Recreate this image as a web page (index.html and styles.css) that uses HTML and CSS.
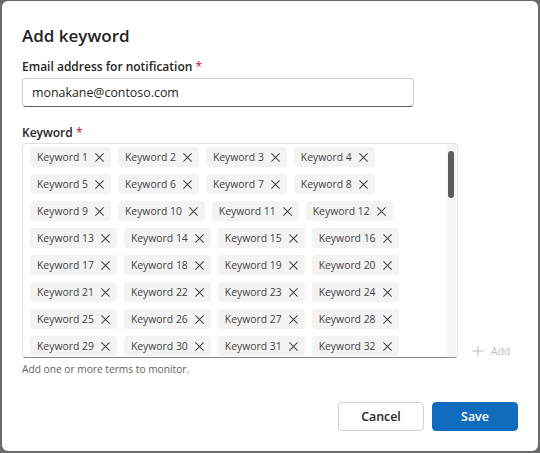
FILE: index.html
```html
<!DOCTYPE html>
<html>
<head>
<meta charset="utf-8">
<link rel="stylesheet" href="styles.css">
</head>
<body>
<div class="frame">
  <div class="dialog">
    <h1 class="title">Add keyword</h1>
    <label class="label">Email address for notification <span class="req">*</span></label>
    <div class="input">monakane@contoso.com</div>
    <label class="label label-kw">Keyword <span class="req">*</span></label>
    <div class="kw-row">
      <div class="kw-box">
        <div class="tags">
          <span class="tag">Keyword 1<svg class="x" viewBox="0 0 12 12"><path d="M1.5 1.5L10.5 10.5M10.5 1.5L1.5 10.5"/></svg></span>
          <span class="tag">Keyword 2<svg class="x" viewBox="0 0 12 12"><path d="M1.5 1.5L10.5 10.5M10.5 1.5L1.5 10.5"/></svg></span>
          <span class="tag">Keyword 3<svg class="x" viewBox="0 0 12 12"><path d="M1.5 1.5L10.5 10.5M10.5 1.5L1.5 10.5"/></svg></span>
          <span class="tag">Keyword 4<svg class="x" viewBox="0 0 12 12"><path d="M1.5 1.5L10.5 10.5M10.5 1.5L1.5 10.5"/></svg></span>
          <span class="tag">Keyword 5<svg class="x" viewBox="0 0 12 12"><path d="M1.5 1.5L10.5 10.5M10.5 1.5L1.5 10.5"/></svg></span>
          <span class="tag">Keyword 6<svg class="x" viewBox="0 0 12 12"><path d="M1.5 1.5L10.5 10.5M10.5 1.5L1.5 10.5"/></svg></span>
          <span class="tag">Keyword 7<svg class="x" viewBox="0 0 12 12"><path d="M1.5 1.5L10.5 10.5M10.5 1.5L1.5 10.5"/></svg></span>
          <span class="tag">Keyword 8<svg class="x" viewBox="0 0 12 12"><path d="M1.5 1.5L10.5 10.5M10.5 1.5L1.5 10.5"/></svg></span>
          <span class="tag">Keyword 9<svg class="x" viewBox="0 0 12 12"><path d="M1.5 1.5L10.5 10.5M10.5 1.5L1.5 10.5"/></svg></span>
          <span class="tag">Keyword 10<svg class="x" viewBox="0 0 12 12"><path d="M1.5 1.5L10.5 10.5M10.5 1.5L1.5 10.5"/></svg></span>
          <span class="tag">Keyword 11<svg class="x" viewBox="0 0 12 12"><path d="M1.5 1.5L10.5 10.5M10.5 1.5L1.5 10.5"/></svg></span>
          <span class="tag">Keyword 12<svg class="x" viewBox="0 0 12 12"><path d="M1.5 1.5L10.5 10.5M10.5 1.5L1.5 10.5"/></svg></span>
          <span class="tag">Keyword 13<svg class="x" viewBox="0 0 12 12"><path d="M1.5 1.5L10.5 10.5M10.5 1.5L1.5 10.5"/></svg></span>
          <span class="tag">Keyword 14<svg class="x" viewBox="0 0 12 12"><path d="M1.5 1.5L10.5 10.5M10.5 1.5L1.5 10.5"/></svg></span>
          <span class="tag">Keyword 15<svg class="x" viewBox="0 0 12 12"><path d="M1.5 1.5L10.5 10.5M10.5 1.5L1.5 10.5"/></svg></span>
          <span class="tag">Keyword 16<svg class="x" viewBox="0 0 12 12"><path d="M1.5 1.5L10.5 10.5M10.5 1.5L1.5 10.5"/></svg></span>
          <span class="tag">Keyword 17<svg class="x" viewBox="0 0 12 12"><path d="M1.5 1.5L10.5 10.5M10.5 1.5L1.5 10.5"/></svg></span>
          <span class="tag">Keyword 18<svg class="x" viewBox="0 0 12 12"><path d="M1.5 1.5L10.5 10.5M10.5 1.5L1.5 10.5"/></svg></span>
          <span class="tag">Keyword 19<svg class="x" viewBox="0 0 12 12"><path d="M1.5 1.5L10.5 10.5M10.5 1.5L1.5 10.5"/></svg></span>
          <span class="tag">Keyword 20<svg class="x" viewBox="0 0 12 12"><path d="M1.5 1.5L10.5 10.5M10.5 1.5L1.5 10.5"/></svg></span>
          <span class="tag">Keyword 21<svg class="x" viewBox="0 0 12 12"><path d="M1.5 1.5L10.5 10.5M10.5 1.5L1.5 10.5"/></svg></span>
          <span class="tag">Keyword 22<svg class="x" viewBox="0 0 12 12"><path d="M1.5 1.5L10.5 10.5M10.5 1.5L1.5 10.5"/></svg></span>
          <span class="tag">Keyword 23<svg class="x" viewBox="0 0 12 12"><path d="M1.5 1.5L10.5 10.5M10.5 1.5L1.5 10.5"/></svg></span>
          <span class="tag">Keyword 24<svg class="x" viewBox="0 0 12 12"><path d="M1.5 1.5L10.5 10.5M10.5 1.5L1.5 10.5"/></svg></span>
          <span class="tag">Keyword 25<svg class="x" viewBox="0 0 12 12"><path d="M1.5 1.5L10.5 10.5M10.5 1.5L1.5 10.5"/></svg></span>
          <span class="tag">Keyword 26<svg class="x" viewBox="0 0 12 12"><path d="M1.5 1.5L10.5 10.5M10.5 1.5L1.5 10.5"/></svg></span>
          <span class="tag">Keyword 27<svg class="x" viewBox="0 0 12 12"><path d="M1.5 1.5L10.5 10.5M10.5 1.5L1.5 10.5"/></svg></span>
          <span class="tag">Keyword 28<svg class="x" viewBox="0 0 12 12"><path d="M1.5 1.5L10.5 10.5M10.5 1.5L1.5 10.5"/></svg></span>
          <span class="tag">Keyword 29<svg class="x" viewBox="0 0 12 12"><path d="M1.5 1.5L10.5 10.5M10.5 1.5L1.5 10.5"/></svg></span>
          <span class="tag">Keyword 30<svg class="x" viewBox="0 0 12 12"><path d="M1.5 1.5L10.5 10.5M10.5 1.5L1.5 10.5"/></svg></span>
          <span class="tag">Keyword 31<svg class="x" viewBox="0 0 12 12"><path d="M1.5 1.5L10.5 10.5M10.5 1.5L1.5 10.5"/></svg></span>
          <span class="tag">Keyword 32<svg class="x" viewBox="0 0 12 12"><path d="M1.5 1.5L10.5 10.5M10.5 1.5L1.5 10.5"/></svg></span>
        </div>
        <div class="scroll"><div class="thumb"></div></div>
      </div>
      <div class="add">
        <svg class="plus" viewBox="0 0 12 12"><path d="M6 0.5V11.5M0.5 6H11.5"/></svg>
        <span>Add</span>
      </div>
    </div>
    <div class="helper">Add one or more terms to monitor.</div>
    <div class="footer">
      <button class="btn btn-cancel">Cancel</button>
      <button class="btn btn-save">Save</button>
    </div>
  </div>
</div>
</body>
</html>
```
FILE: styles.css
```css
* { box-sizing: border-box; }
html, body { margin: 0; padding: 0; }
body {
  font-family: "Open Sans", "Noto Sans", sans-serif;
  color: #242424;
}
.frame {
  background: #6b6b6b;
  width: 540px;
  height: 453px;
  padding: 1px 2px 2px 2px;
}
.dialog {
  background: #fff;
  height: 100%;
  border-radius: 6px;
  padding: 23px 20px 20px 20px;
  display: flex;
  flex-direction: column;
}
.title {
  margin: 0;
  font-size: 17px;
  line-height: 24px;
  font-weight: 600;
}
.label {
  display: block;
  font-size: 12px;
  line-height: 18px;
  font-weight: 600;
  margin-top: 10px;
}
.label-kw { margin-top: 17px; }
.req { color: #c50f1f; font-weight: 400; }
.input {
  margin-top: 2px;
  width: 392px;
  height: 29px;
  border: 1px solid #d1d1d1;
  border-bottom-color: #616161;
  border-radius: 4px;
  padding: 0 9px;
  font-size: 12.4px;
  line-height: 27px;
}
.kw-row {
  margin-top: 1px;
  display: flex;
  align-items: flex-end;
  gap: 14px;
}
.kw-box {
  width: 436px;
  height: 215px;
  border: 1px solid #e0e0e0;
  border-bottom-color: #8a8a8a;
  border-radius: 4px;
  display: flex;
  overflow: hidden;
}
.tags {
  flex: 1;
  display: flex;
  flex-wrap: wrap;
  align-content: flex-start;
  gap: 7px 7px;
  padding: 3px 0 0 7px;
  overflow: hidden;
}
.tag {
  display: inline-flex;
  align-items: center;
  height: 20px;
  padding: 0 6px 0 7px;
  gap: 6px;
  background: #f3f3f3;
  border-radius: 4px;
  font-size: 10.4px;
  color: #424242;
  white-space: nowrap;
}
.x {
  width: 11px;
  height: 11px;
  fill: none;
  stroke: #424242;
  stroke-width: 1.1;
}
.scroll {
  width: 9px;
  margin-right: 1px;
  background: #f5f5f5;
  padding: 7px 1px 0 1px;
}
.thumb {
  width: 6px;
  height: 47px;
  background: #5c5c5c;
  border-radius: 3px;
}
.add {
  display: flex;
  align-items: center;
  gap: 7px;
  color: #bdbdbd;
  font-size: 10.5px;
  margin-bottom: 1px;
  height: 12px;
}
.plus {
  width: 12px;
  height: 12px;
  fill: none;
  stroke: #bdbdbd;
  stroke-width: 1;
}
.helper {
  margin-top: 3px;
  font-size: 10.2px;
  line-height: 16px;
  color: #616161;
}
.footer {
  margin-top: auto;
  display: flex;
  justify-content: flex-end;
  gap: 8px;
}
.btn {
  width: 86px;
  height: 29px;
  border-radius: 4px;
  font-family: "Open Sans", "Noto Sans", sans-serif;
  font-size: 12.4px;
  font-weight: 600;
  padding: 0;
  cursor: pointer;
}
.btn-cancel {
  background: #fff;
  border: 1px solid #d1d1d1;
  color: #242424;
}
.btn-save {
  background: #0f6cbd;
  border: 1px solid #0f6cbd;
  color: #fff;
}
```
